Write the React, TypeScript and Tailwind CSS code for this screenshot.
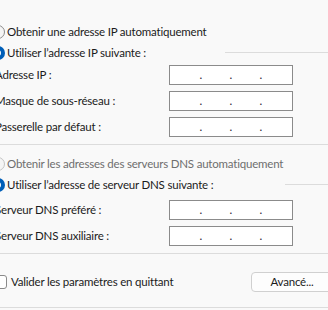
import React from 'react';

const IpBox: React.FC = () => {
  return (
    <div className="w-[124px] h-[20px] bg-white border border-[#8b8b8b] flex items-center pl-[2px] leading-none text-[#1a1a2e]">
      <span className="w-[30px] text-right">.</span>
      <span className="w-[30px] text-right">.</span>
      <span className="w-[30px] text-right">.</span>
    </div>
  );
};

const Field: React.FC<{ label: string }> = ({ label }) => {
  return (
    <div className="h-[20px] flex items-center">
      <span className="w-[174px] ml-[-5px] shrink-0">{label}</span>
      <IpBox />
    </div>
  );
};

const Radio: React.FC<{ checked?: boolean; disabled?: boolean }> = ({ checked, disabled }) => {
  if (checked) {
    return (
      <span className="w-[14px] h-[14px] ml-[-9px] mr-[2px] shrink-0 rounded-full bg-[#005fb8] flex items-center justify-center">
        <span className="w-[6px] h-[6px] rounded-full bg-white" />
      </span>
    );
  }
  return (
    <span
      className={
        disabled
          ? 'w-[14px] h-[14px] ml-[-9px] mr-[2px] shrink-0 rounded-full border border-[#c4c4c4] bg-[#f5f5f5]'
          : 'w-[14px] h-[14px] ml-[-9px] mr-[2px] shrink-0 rounded-full border border-[#8a8a8a] bg-[#f5f5f5]'
      }
    />
  );
};

const App: React.FC = () => {
  return (
    <div className="w-[328px] h-[310px] overflow-hidden bg-[#f9f9f9] text-[11.5px] tracking-[-0.2px] text-[#1b1b1b] font-['Lato',sans-serif]">
      <div className="pt-[21px] flex flex-col">
        <div className="h-[21px] flex items-center">
          <Radio />
          <span>Obtenir une adresse IP automatiquement</span>
        </div>
        <div className="h-[21px] flex items-center">
          <Radio checked />
          <span>Utiliser l’adresse IP suivante :</span>
          <span className="ml-auto w-[103px] h-px bg-[#dcdcdc]" />
        </div>
        <div className="mt-[2px] flex flex-col gap-[6px]">
          <Field label="Adresse IP :" />
          <Field label="Masque de sous-réseau :" />
          <Field label="Passerelle par défaut :" />
        </div>
        <div className="mt-[7px] h-px bg-[#dcdcdc]" />
        <div className="mt-[8px] h-[21px] flex items-center text-[#6e6e6e] whitespace-nowrap">
          <Radio disabled />
          <span>Obtenir les adresses des serveurs DNS automatiquement</span>
        </div>
        <div className="h-[21px] flex items-center">
          <Radio checked />
          <span>Utiliser l’adresse de serveur DNS suivante :</span>
          <span className="ml-auto w-[43px] h-px bg-[#dcdcdc]" />
        </div>
        <div className="mt-[5px] flex flex-col gap-[6px]">
          <Field label="Serveur DNS préféré :" />
          <Field label="Serveur DNS auxiliaire :" />
        </div>
        <div className="mt-[7px] h-px bg-[#dcdcdc]" />
        <div className="mt-[18px] h-[20px] flex items-center">
          <span className="w-[14px] h-[14px] ml-[-7px] mr-[4px] shrink-0 rounded-[3px] border border-[#8a8a8a] bg-white" />
          <span>Valider les paramètres en quittant</span>
          <button className="ml-auto mr-[-5px] w-[82px] h-[20px] shrink-0 rounded-[4px] border border-[#d0d0d0] bg-[#fdfdfd] text-[11.5px] leading-none">
            Avancé...
          </button>
        </div>
        <div className="mt-[15px] h-px bg-[#dcdcdc]" />
      </div>
    </div>
  );
};

export default App;
